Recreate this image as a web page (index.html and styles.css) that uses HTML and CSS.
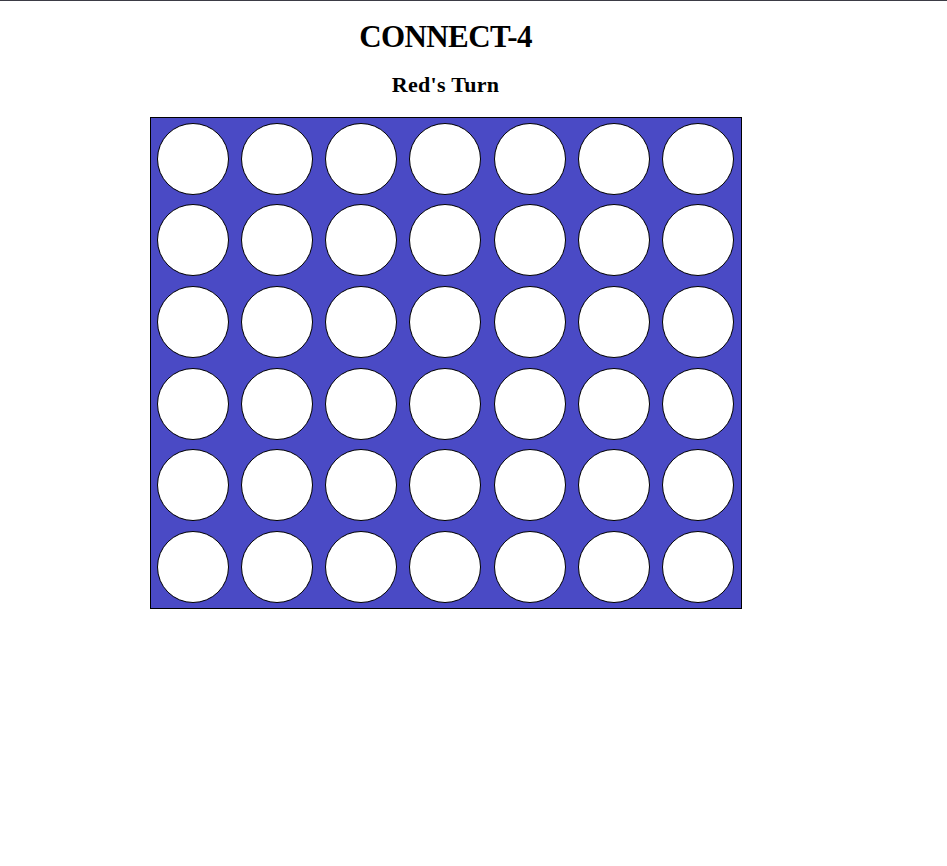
FILE: index.html
```html
<!DOCTYPE html>
<html>
<head>
<meta charset="utf-8">
<link rel="stylesheet" href="styles.css">
</head>
<body>
<div class="page">
  <h1 class="title">CONNECT-4</h1>
  <h2 class="turn">Red's Turn</h2>
  <div class="board">
    <div class="cell"><div class="slot"></div></div><div class="cell"><div class="slot"></div></div><div class="cell"><div class="slot"></div></div><div class="cell"><div class="slot"></div></div><div class="cell"><div class="slot"></div></div><div class="cell"><div class="slot"></div></div><div class="cell"><div class="slot"></div></div>
    <div class="cell"><div class="slot"></div></div><div class="cell"><div class="slot"></div></div><div class="cell"><div class="slot"></div></div><div class="cell"><div class="slot"></div></div><div class="cell"><div class="slot"></div></div><div class="cell"><div class="slot"></div></div><div class="cell"><div class="slot"></div></div>
    <div class="cell"><div class="slot"></div></div><div class="cell"><div class="slot"></div></div><div class="cell"><div class="slot"></div></div><div class="cell"><div class="slot"></div></div><div class="cell"><div class="slot"></div></div><div class="cell"><div class="slot"></div></div><div class="cell"><div class="slot"></div></div>
    <div class="cell"><div class="slot"></div></div><div class="cell"><div class="slot"></div></div><div class="cell"><div class="slot"></div></div><div class="cell"><div class="slot"></div></div><div class="cell"><div class="slot"></div></div><div class="cell"><div class="slot"></div></div><div class="cell"><div class="slot"></div></div>
    <div class="cell"><div class="slot"></div></div><div class="cell"><div class="slot"></div></div><div class="cell"><div class="slot"></div></div><div class="cell"><div class="slot"></div></div><div class="cell"><div class="slot"></div></div><div class="cell"><div class="slot"></div></div><div class="cell"><div class="slot"></div></div>
    <div class="cell"><div class="slot"></div></div><div class="cell"><div class="slot"></div></div><div class="cell"><div class="slot"></div></div><div class="cell"><div class="slot"></div></div><div class="cell"><div class="slot"></div></div><div class="cell"><div class="slot"></div></div><div class="cell"><div class="slot"></div></div>
  </div>
</div>
</body>
</html>
```
FILE: styles.css
```css
html, body {
  margin: 0;
  padding: 0;
  background: #ffffff;
}
body {
  border-top: 1px solid #3b3b45;
  font-family: "Liberation Serif", "Times New Roman", serif;
  color: #000;
}
.page {
  width: 891px;
  display: flex;
  flex-direction: column;
  align-items: center;
}
.title {
  font-size: 31px;
  line-height: 37px;
  font-weight: bold;
  letter-spacing: -0.6px;
  margin: 17px 0 0;
}
.turn {
  font-size: 22px;
  line-height: 25px;
  font-weight: bold;
  letter-spacing: 0.3px;
  margin: 17px 0 0;
}
.board {
  margin-top: 20px;
  width: 590px;
  height: 490px;
  border: 1px solid #000;
  background: #4a4ac5;
  display: grid;
  grid-template-columns: repeat(7, 1fr);
  grid-template-rows: repeat(6, 1fr);
}
.cell {
  display: flex;
  align-items: center;
  justify-content: center;
}
.slot {
  width: 70px;
  height: 70px;
  border: 1px solid #000;
  border-radius: 50%;
  background: #fff;
}
```
